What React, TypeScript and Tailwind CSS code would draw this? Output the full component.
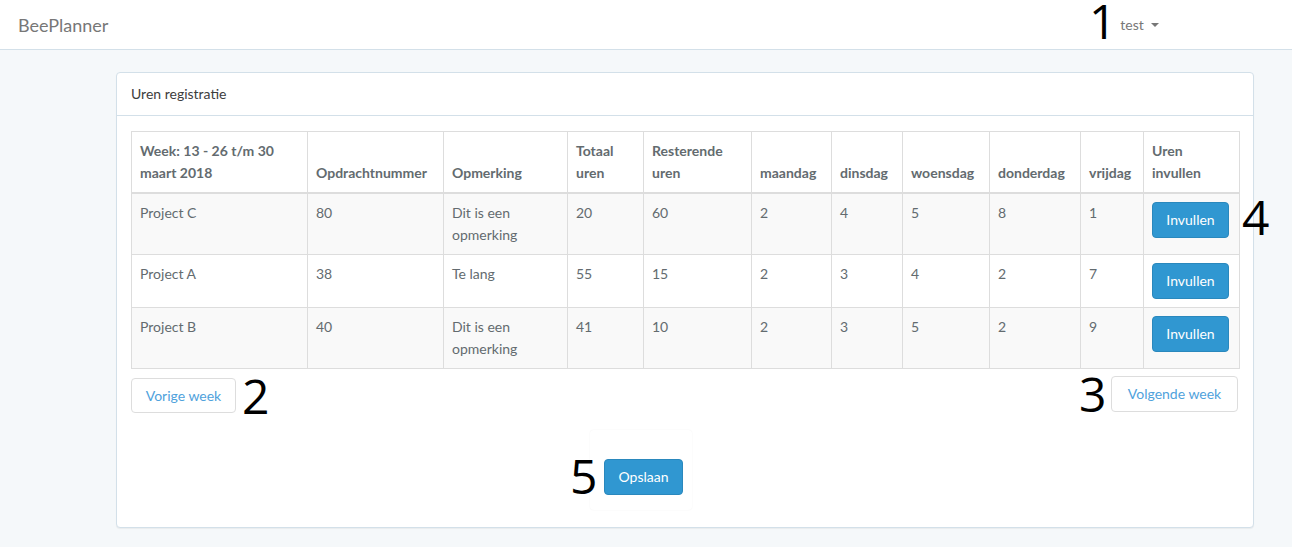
import React from "react";

type Row = {
  project: string;
  nummer: string;
  opmerking: React.ReactNode;
  totaal: string;
  rest: string;
  days: string[];
};

const rows: Row[] = [
  { project: "Project C", nummer: "80", opmerking: <>Dit is een<br />opmerking</>, totaal: "20", rest: "60", days: ["2", "4", "5", "8", "1"] },
  { project: "Project A", nummer: "38", opmerking: "Te lang", totaal: "55", rest: "15", days: ["2", "3", "4", "2", "7"] },
  { project: "Project B", nummer: "40", opmerking: <>Dit is een<br />opmerking</>, totaal: "41", rest: "10", days: ["2", "3", "5", "2", "9"] },
];

const widths = [176, 136, 124, 76, 108, 80, 71, 87, 91, 63, 96];

function Mark({ n, className }: { n: string; className: string }) {
  return (
    <span
      className={`absolute text-[48px] leading-[40px] text-black font-['Open_Sans',sans-serif] ${className}`}
    >
      {n}
    </span>
  );
}

export default function App() {
  const th = "border border-[#ddd] border-b-2 px-2 py-2 text-left align-bottom font-bold";
  const td = "border border-[#ddd] px-2 py-2 align-top";

  return (
    <div className="relative min-h-[547px] bg-[#f5f8fa] text-[14px] leading-[22px] text-[#636b6f] font-['Lato','Open_Sans',sans-serif]">
      <nav className="flex h-[50px] items-center border-b border-[#d3e0e9] bg-white">
        <span className="ml-[18px] text-[18px] text-[#777]">BeePlanner</span>
        <span className="ml-[1012px] flex items-center gap-[7px] text-[#777]">
          test
          <span className="mt-[1px] h-0 w-0 border-x-[4px] border-t-[4px] border-x-transparent border-t-[#777]" />
        </span>
      </nav>

      <div className="ml-[116px] mt-[22px] w-[1138px] rounded border border-[#d3e0e9] bg-white shadow-[0_1px_1px_rgba(0,0,0,0.05)]">
        <div className="border-b border-[#d3e0e9] px-[14px] py-[10px] text-[#3d3d3d]">Uren registratie</div>
        <div className="px-[14px] pt-[15px] pb-[17px]">
          <table className="w-[1108px] table-fixed border-collapse">
            <colgroup>
              {widths.map((w, i) => (
                <col key={i} style={{ width: w }} />
              ))}
            </colgroup>
            <thead>
              <tr>
                <th className={th}>Week: 13 - 26 t/m 30<br />maart 2018</th>
                <th className={th}>Opdrachtnummer</th>
                <th className={th}>Opmerking</th>
                <th className={th}>Totaal<br />uren</th>
                <th className={th}>Resterende<br />uren</th>
                <th className={th}>maandag</th>
                <th className={th}>dinsdag</th>
                <th className={th}>woensdag</th>
                <th className={th}>donderdag</th>
                <th className={th}>vrijdag</th>
                <th className={th}>Uren<br />invullen</th>
              </tr>
            </thead>
            <tbody>
              {rows.map((r, i) => (
                <tr key={r.project} className={i % 2 === 0 ? "bg-[#f9f9f9]" : "bg-white"}>
                  <td className={td}>{r.project}</td>
                  <td className={td}>{r.nummer}</td>
                  <td className={td}>{r.opmerking}</td>
                  <td className={td}>{r.totaal}</td>
                  <td className={td}>{r.rest}</td>
                  {r.days.map((d, j) => (
                    <td key={j} className={td}>{d}</td>
                  ))}
                  <td className={td}>
                    <button className="h-[36px] w-[77px] rounded border border-[#2a88bd] bg-[#3097d1] text-white">
                      Invullen
                    </button>
                  </td>
                </tr>
              ))}
            </tbody>
          </table>

          <div className="flex items-start justify-between">
            <button className="mt-[9px] h-[35px] w-[105px] rounded border border-[#ddd] bg-white text-[#4fa2dc]">
              Vorige week
            </button>
            <button className="mt-[7px] mr-[1px] h-[36px] w-[127px] rounded border border-[#ddd] bg-white text-[#4fa2dc]">
              Volgende week
            </button>
          </div>

          <div className="ml-[459px] mt-[17px] w-[102px] rounded pl-[14px] pt-[29px] pb-[15px] shadow-[0_0_2px_rgba(0,0,0,0.06)]">
            <button className="h-[36px] w-[79px] rounded border border-[#2a88bd] bg-[#3097d1] text-white">
              Opslaan
            </button>
          </div>
        </div>
      </div>

      <Mark n="1" className="left-[1089px] top-[1px]" />
      <Mark n="2" className="left-[242px] top-[376px]" />
      <Mark n="3" className="left-[1079px] top-[374px]" />
      <Mark n="4" className="left-[1242px] top-[197px]" />
      <Mark n="5" className="left-[570px] top-[456px]" />
    </div>
  );
}
